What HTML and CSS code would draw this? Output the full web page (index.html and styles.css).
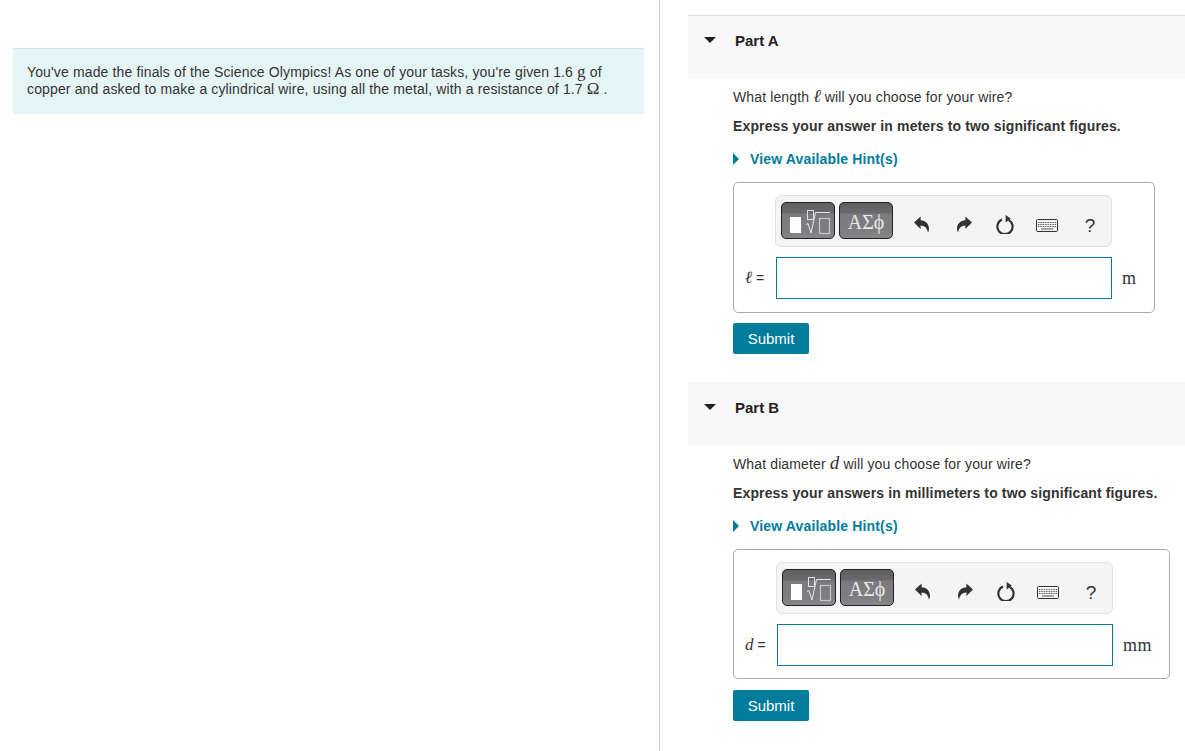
FILE: index.html
```html
<!DOCTYPE html>
<html lang="en">
  <head>
    <meta charset="UTF-8" />
    <meta name="viewport" content="width=device-width, initial-scale=1.0" />
    <title>Science Olympics wire problem</title>
    <link rel="stylesheet" href="styles.css">
  </head>
  <body>
    <svg class="icon-defs" width="0" height="0" aria-hidden="true">
      <symbol id="templates" viewBox="0 0 52 35">
        <rect x="8" y="14" width="11" height="16" fill="#fff" />
        <rect x="25.5" y="7.5" width="6" height="9" fill="none" stroke="#ddd" />
        <path d="M24 21.5 26 20.5 29 30 33.5 9.5H48" fill="none" stroke="#e6e6e6" />
        <rect x="37.5" y="15.5" width="10" height="15" fill="none" stroke="#c8c8c8" stroke-width="1.2" />
      </symbol>
      <symbol id="undo" viewBox="0 0 15 17">
        <path d="M0 6.6 6.6 0.4V4.2C11.6 4.2 15 8 15 12.6 15 14.2 14.6 15.6 14 16.8 13.4 12.6 11 9.4 6.6 9.4V13Z" />
      </symbol>
      <symbol id="redo" viewBox="0 0 15 17">
        <path d="M15 6.6 8.4 0.4V4.2C3.4 4.2 0 8 0 12.6 0 14.2 0.4 15.6 1 16.8 1.6 12.6 4 9.4 8.4 9.4V13Z" />
      </symbol>
      <symbol id="reload" viewBox="0 0 18 19">
        <path d="M6 4.6A7.6 7.6 0 1 0 12.6 4.9" fill="none" stroke="currentColor" stroke-width="2.2" />
        <path d="M9.6 0 14.8 3.6 9.6 7.4Z" />
      </symbol>
      <symbol id="keyboard" viewBox="0 0 22 13">
        <rect x="0.5" y="0.5" width="21" height="12" rx="1" fill="#f4f4f4" stroke="currentColor" />
        <path d="M2 3.5h18M2 5.5h18M2 7.5h18" fill="none" stroke="#555" stroke-dasharray="1 0.7" />
        <path d="M5 10h12" fill="none" stroke="#555" />
      </symbol>
    </svg>

    <main class="page">
      <section class="intro-pane">
        <div class="intro-box">
          <p>
            You've made the finals of the Science Olympics! As one of your tasks, you're given 1.6 <span class="unit-inline">g</span> of
            copper and asked to make a cylindrical wire, using all the metal, with a resistance of 1.7 <span class="unit-inline">Ω</span> .
          </p>
        </div>
      </section>

      <section class="parts-pane">
        <article class="part part-a">
          <header class="part-head">
            <span class="caret-down"></span>
            <h2>Part A</h2>
          </header>
          <div class="part-body">
            <p class="question">What length <i class="var var-script">ℓ</i> will you choose for your wire?</p>
            <p class="instruction">Express your answer in meters to two significant figures.</p>
            <a class="hint-link" href="#"><span class="caret-right"></span>View Available Hint(s)</a>
            <div class="answer-box">
              <div class="answer-label"><i class="var var-script">ℓ</i> =</div>
              <div class="answer-main">
                <div class="toolbar">
                  <button class="math-btn" type="button"><svg class="ico-templates"><use href="#templates" /></svg></button>
                  <button class="math-btn math-btn-greek" type="button">ΑΣϕ</button>
                  <div class="tools">
                    <span class="tool"><svg class="ico-undo"><use href="#undo" /></svg></span>
                    <span class="tool"><svg class="ico-redo"><use href="#redo" /></svg></span>
                    <span class="tool"><svg class="ico-reload"><use href="#reload" /></svg></span>
                    <span class="tool"><svg class="ico-keyboard"><use href="#keyboard" /></svg></span>
                    <span class="tool tool-help">?</span>
                  </div>
                </div>
                <input class="answer-input" type="text" aria-label="length" />
              </div>
              <div class="answer-unit">m</div>
            </div>
            <button class="submit-btn" type="button">Submit</button>
          </div>
        </article>

        <article class="part part-b">
          <header class="part-head">
            <span class="caret-down"></span>
            <h2>Part B</h2>
          </header>
          <div class="part-body">
            <p class="question">What diameter <i class="var">d</i> will you choose for your wire?</p>
            <p class="instruction">Express your answers in millimeters to two significant figures.</p>
            <a class="hint-link" href="#"><span class="caret-right"></span>View Available Hint(s)</a>
            <div class="answer-box">
              <div class="answer-label"><i class="var">d</i> =</div>
              <div class="answer-main">
                <div class="toolbar">
                  <button class="math-btn" type="button"><svg class="ico-templates"><use href="#templates" /></svg></button>
                  <button class="math-btn math-btn-greek" type="button">ΑΣϕ</button>
                  <div class="tools">
                    <span class="tool"><svg class="ico-undo"><use href="#undo" /></svg></span>
                    <span class="tool"><svg class="ico-redo"><use href="#redo" /></svg></span>
                    <span class="tool"><svg class="ico-reload"><use href="#reload" /></svg></span>
                    <span class="tool"><svg class="ico-keyboard"><use href="#keyboard" /></svg></span>
                    <span class="tool tool-help">?</span>
                  </div>
                </div>
                <input class="answer-input" type="text" aria-label="diameter" />
              </div>
              <div class="answer-unit">mm</div>
            </div>
            <button class="submit-btn" type="button">Submit</button>
          </div>
        </article>
      </section>
    </main>
  </body>
</html>
```

FILE: styles.css
```css
* {
  box-sizing: border-box;
}
html,
body {
  height: 100%;
}
body {
  margin: 0;
  background-color: #fff;
  color: #333;
  font-family: "Liberation Sans", Arial, sans-serif;
  font-size: 14px;
  overflow: hidden;
}
p,
h2 {
  margin: 0;
}
.icon-defs {
  position: absolute;
}
.page {
  display: flex;
  height: 751px;
}

/* left pane */
.intro-pane {
  width: 660px;
  flex: none;
  padding: 48px 15px 0 13px;
  border-right: 1px solid #ccc;
}
.intro-box {
  height: 66px;
  padding: 15px 0 0 14px;
  background-color: #e5f5f6;
  border-top: 1px solid #d9e6e8;
  line-height: 17px;
  letter-spacing: 0.14px;
}
.unit-inline {
  font-family: "Liberation Serif", serif;
  font-size: 17px;
  line-height: 0;
}

/* right pane */
.parts-pane {
  flex: 1;
  padding: 15px 0 0 28px;
  min-width: 0;
}
.part-b {
  margin-top: 28px;
}
.part-head {
  display: flex;
  height: 63px;
  padding: 17px 0 0 16px;
  background-color: #f8f8f8;
}
.part-a .part-head {
  padding-top: 16px;
  border-top: 1px solid #ddd;
}
.part-head h2 {
  margin-left: 19px;
  color: #222;
  font-size: 15px;
  font-weight: bold;
  line-height: 17px;
}
.caret-down {
  width: 0;
  height: 0;
  margin-top: 5px;
  border-left: 6px solid transparent;
  border-right: 6px solid transparent;
  border-top: 6px solid #222;
}
.part-body {
  padding: 11px 0 0 45px;
}
.question {
  line-height: 17px;
  letter-spacing: 0.13px;
}
.instruction {
  margin-top: 12px;
  font-weight: bold;
  line-height: 17px;
  letter-spacing: 0.13px;
}
.var {
  font-family: "Liberation Serif", serif;
  font-size: 19px;
  line-height: 0;
}
.var-script {
  font-family: "DejaVu Serif", serif;
  font-size: 18px;
}
.hint-link {
  display: flex;
  align-items: center;
  margin-top: 16px;
  color: #007c9c;
  font-weight: bold;
  line-height: 17px;
  letter-spacing: 0.16px;
  text-decoration: none;
}
.caret-right {
  width: 0;
  height: 0;
  margin-right: 11px;
  border-top: 6px solid transparent;
  border-bottom: 6px solid transparent;
  border-left: 6px solid #007c9c;
  position: relative;
  top: -1px;
}

/* answer box */
.answer-box {
  display: inline-flex;
  margin-top: 14px;
  padding: 12px 0 13px;
  border: 1px solid #aaa;
  border-radius: 5px;
  vertical-align: top;
}
.part-b .answer-box {
  padding-bottom: 12px;
}
.answer-label {
  width: 42px;
  padding: 73px 0 0 11px;
  line-height: 20px;
  white-space: nowrap;
  font-size: 14px;
}
.answer-label .var {
  font-size: 17px;
}
.answer-label .var-script {
  font-size: 17px;
}
.part-b .answer-label {
  width: 43px;
}
.answer-main {
  width: 336px;
}
.answer-unit {
  padding: 73px 17px 0 10px;
  font-family: "Liberation Serif", serif;
  font-size: 18px;
  line-height: 20px;
  letter-spacing: 0.5px;
}
.toolbar {
  display: flex;
  height: 52px;
  margin-left: -1px;
  padding: 6px 0 0 5px;
  background-color: #f4f4f4;
  border: 1px solid #e1e1e1;
  border-radius: 6px;
}
.math-btn {
  width: 54px;
  height: 37px;
  margin: 0 4px 0 0;
  padding: 0;
  color: #e8e8e8;
  background: linear-gradient(#5f5f61 0, #6a6a6c 10px, #7b7b7f 11px, #7e7e82 28px, #8b8b8f 37px);
  border: 1px solid #222;
  border-radius: 5px;
}
.math-btn-greek {
  font-family: "Liberation Serif", serif;
  font-size: 20px;
  padding-top: 3px;
}
.ico-templates {
  display: block;
  width: 52px;
  height: 35px;
}
.tools {
  display: flex;
  margin-left: 3px;
}
.tool {
  display: flex;
  align-items: center;
  justify-content: center;
  width: 42px;
  height: 36px;
  margin-top: 4px;
  color: #333;
  fill: currentColor;
}
.tool:nth-child(2) {
  transform: translateX(1px);
}
.ico-undo,
.ico-redo {
  width: 15px;
  height: 17px;
}
.ico-reload {
  width: 18px;
  height: 19px;
}
.ico-keyboard {
  width: 22px;
  height: 13px;
  margin-top: 2px;
}
.tool-help {
  font-size: 19px;
  padding: 3px 0 0 2px;
}
.answer-input {
  display: block;
  width: 100%;
  height: 42px;
  margin-top: 10px;
  border: 1px solid #007c9c;
  border-radius: 0;
  background-color: #fff;
}
.submit-btn {
  display: block;
  width: 76px;
  height: 31px;
  margin-top: 10px;
  padding: 0;
  color: #fff;
  background-color: #007c9c;
  border: none;
  border-radius: 2px;
  font-family: inherit;
  font-size: 15px;
}
.part-b .submit-btn {
  margin-top: 11px;
}
```
